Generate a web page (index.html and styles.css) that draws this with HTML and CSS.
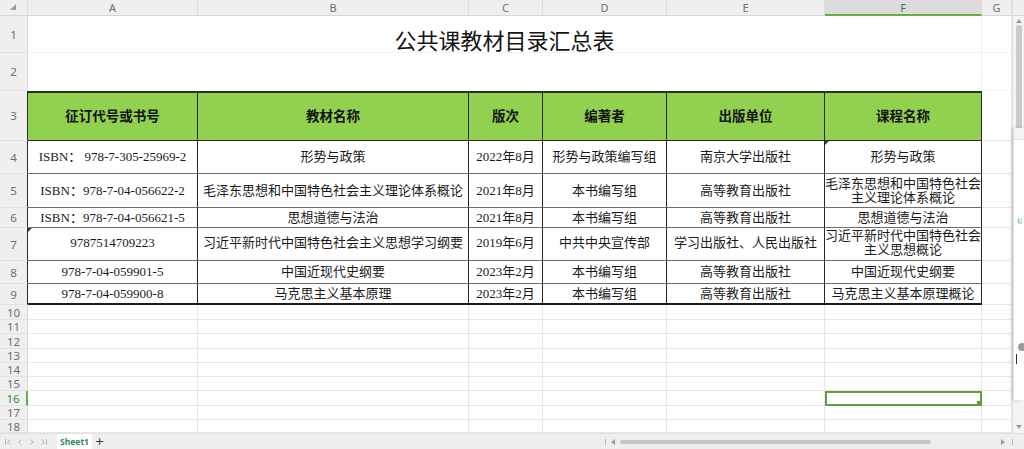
FILE: index.html
```html
<!DOCTYPE html>
<html lang="zh-CN">
<head>
<meta charset="utf-8">
<title>公共课教材目录汇总表</title>
<link rel="stylesheet" href="styles.css">
</head>
<body>
<div class="app">
  <div class="main">
    <div class="sheet">
      <!-- column headers -->
      <div class="c ch corner"><svg width="6" height="6" viewBox="0 0 6 6"><polygon points="6,0 6,6 0,6" fill="#9a9a9a"/></svg></div>
      <div class="c ch">A</div>
      <div class="c ch">B</div>
      <div class="c ch">C</div>
      <div class="c ch">D</div>
      <div class="c ch">E</div>
      <div class="c ch sel">F</div>
      <div class="c ch">G</div>

      <!-- row 1 -->
      <div class="c rh">1</div>
      <div class="c title">公共课教材目录汇总表</div>
      <div class="c faint"></div>

      <!-- row 2 -->
      <div class="c rh">2</div>
      <div class="c blank"></div>
      <div class="c faint"></div>

      <!-- row 3 header -->
      <div class="c rh edge">3</div>
      <div class="c t hd">征订代号或书号</div>
      <div class="c t hd">教材名称</div>
      <div class="c t hd">版次</div>
      <div class="c t hd">编著者</div>
      <div class="c t hd">出版单位</div>
      <div class="c t hd">课程名称</div>
      <div class="c"></div>

      <!-- row 4 -->
      <div class="c rh edge">4</div>
      <div class="c t">ISBN： 978-7-305-25969-2</div>
      <div class="c t">形势与政策</div>
      <div class="c t">2022年8月</div>
      <div class="c t">形势与政策编写组</div>
      <div class="c t">南京大学出版社</div>
      <div class="c t mark">形势与政策</div>
      <div class="c"></div>

      <!-- row 5 -->
      <div class="c rh edge">5</div>
      <div class="c t">ISBN：978-7-04-056622-2</div>
      <div class="c t">毛泽东思想和中国特色社会主义理论体系概论</div>
      <div class="c t">2021年8月</div>
      <div class="c t">本书编写组</div>
      <div class="c t">高等教育出版社</div>
      <div class="c t"><span>毛泽东思想和中国特色社会<br>主义理论体系概论</span></div>
      <div class="c"></div>

      <!-- row 6 -->
      <div class="c rh edge">6</div>
      <div class="c t">ISBN：978-7-04-056621-5</div>
      <div class="c t">思想道德与法治</div>
      <div class="c t">2021年8月</div>
      <div class="c t">本书编写组</div>
      <div class="c t">高等教育出版社</div>
      <div class="c t">思想道德与法治</div>
      <div class="c"></div>

      <!-- row 7 -->
      <div class="c rh edge">7</div>
      <div class="c t mark up">9787514709223</div>
      <div class="c t up">习近平新时代中国特色社会主义思想学习纲要</div>
      <div class="c t up">2019年6月</div>
      <div class="c t up">中共中央宣传部</div>
      <div class="c t up">学习出版社、人民出版社</div>
      <div class="c t up"><span>习近平新时代中国特色社会<br>主义思想概论</span></div>
      <div class="c"></div>

      <!-- row 8 -->
      <div class="c rh edge">8</div>
      <div class="c t">978-7-04-059901-5</div>
      <div class="c t">中国近现代史纲要</div>
      <div class="c t">2023年2月</div>
      <div class="c t">本书编写组</div>
      <div class="c t">高等教育出版社</div>
      <div class="c t">中国近现代史纲要</div>
      <div class="c"></div>

      <!-- row 9 -->
      <div class="c rh edge">9</div>
      <div class="c t last">978-7-04-059900-8</div>
      <div class="c t last">马克思主义基本原理</div>
      <div class="c t last">2023年2月</div>
      <div class="c t last">本书编写组</div>
      <div class="c t last">高等教育出版社</div>
      <div class="c t last">马克思主义基本原理概论</div>
      <div class="c"></div>

      <!-- rows 10-18 -->
      <div class="c rh">10</div><div class="c"></div><div class="c"></div><div class="c"></div><div class="c"></div><div class="c"></div><div class="c"></div><div class="c"></div>
      <div class="c rh">11</div><div class="c"></div><div class="c"></div><div class="c"></div><div class="c"></div><div class="c"></div><div class="c"></div><div class="c"></div>
      <div class="c rh">12</div><div class="c"></div><div class="c"></div><div class="c"></div><div class="c"></div><div class="c"></div><div class="c"></div><div class="c"></div>
      <div class="c rh">13</div><div class="c"></div><div class="c"></div><div class="c"></div><div class="c"></div><div class="c"></div><div class="c"></div><div class="c"></div>
      <div class="c rh">14</div><div class="c"></div><div class="c"></div><div class="c"></div><div class="c"></div><div class="c"></div><div class="c"></div><div class="c"></div>
      <div class="c rh">15</div><div class="c"></div><div class="c"></div><div class="c"></div><div class="c"></div><div class="c"></div><div class="c"></div><div class="c"></div>
      <div class="c rh sel">16</div><div class="c"></div><div class="c"></div><div class="c"></div><div class="c"></div><div class="c"></div><div class="c fsel"></div><div class="c"></div>
      <div class="c rh">17</div><div class="c"></div><div class="c"></div><div class="c"></div><div class="c"></div><div class="c"></div><div class="c"></div><div class="c"></div>
      <div class="c rh">18</div><div class="c"></div><div class="c"></div><div class="c"></div><div class="c"></div><div class="c"></div><div class="c"></div><div class="c"></div>
    </div>

    <div class="vs">
      <div class="vs-head"></div>
      <svg class="vs-arr" width="6" height="4" viewBox="0 0 6 4"><polygon points="3,0 6,4 0,4" fill="#9a9a9a"/></svg>
      <div class="vs-thumb"></div>
      <div class="vs-fill"></div>
      <svg class="vs-arr down" width="6" height="4" viewBox="0 0 6 4"><polygon points="0,0 6,0 3,4" fill="#9a9a9a"/></svg>
    </div>
  </div>

  <div class="tabbar">
    <div class="nav">
      <svg width="12" height="8" viewBox="0 0 12 8"><path d="M3.5 1v6M8.5 1.5L5.5 4l3 2.5" fill="none" stroke="#b3b3b3" stroke-width="1"/></svg>
      <svg width="12" height="8" viewBox="0 0 12 8"><path d="M7.5 1.5L4.5 4l3 2.5" fill="none" stroke="#b3b3b3" stroke-width="1"/></svg>
      <svg width="12" height="8" viewBox="0 0 12 8"><path d="M4.5 1.5L7.5 4l-3 2.5" fill="none" stroke="#b3b3b3" stroke-width="1"/></svg>
      <svg width="12" height="8" viewBox="0 0 12 8"><path d="M3.5 1.5L6.5 4l-3 2.5M8.5 1v6" fill="none" stroke="#b3b3b3" stroke-width="1"/></svg>
    </div>
    <div class="tab">Sheet1</div>
    <div class="plus">+</div>
    <div class="hs">
      <div class="sep"></div>
      <svg class="harr" width="4" height="6" viewBox="0 0 4 6"><polygon points="4,0 4,6 0,3" fill="#9a9a9a"/></svg>
      <div class="track"></div>
      <div class="hs-fill"></div>
      <svg class="harr" width="4" height="6" viewBox="0 0 4 6"><polygon points="0,0 4,3 0,6" fill="#9a9a9a"/></svg>
      <div class="sep right"></div>
    </div>
  </div>

  <div class="panel">
    <div class="panel-head"></div>
    <div class="panel-mark">衫</div>
    <div class="panel-dot"></div>
    <div class="panel-caret"></div>
  </div>
</div>
</body>
</html>
```

FILE: styles.css
```css
* {
  box-sizing: border-box;
  margin: 0;
  padding: 0;
}

body {
  margin: 0;
  width: 1024px;
  height: 449px;
  overflow: hidden;
  background: #ffffff;
  font-family: "Noto Sans", "Noto Sans CJK SC", sans-serif;
}

.app {
  position: relative;
  display: flex;
  flex-direction: column;
  width: 1024px;
  height: 449px;
}

.main {
  display: flex;
  height: 433px;
}

.sheet {
  display: grid;
  width: 1012px;
  grid-template-columns: 28px 170px 271px 74px 124px 158px 157px 30px;
  grid-template-rows: 16px 37px 38px 50px 33px 34px 20px 33px 23px 21px 15px 14px 15px 14px 14px 14px 15px 14px 13px;
}

.c {
  position: relative;
  display: flex;
  align-items: center;
  justify-content: center;
  overflow: hidden;
  white-space: nowrap;
  border-right: 1px solid #e6e6e6;
  border-bottom: 1px solid #e6e6e6;
}

.faint {
  border-bottom-color: #f2f2f2;
}

/* column headers */
.ch {
  background: #efefef;
  color: #6e6e6e;
  font-size: 11px;
  border-right-color: #dedede;
  border-bottom-color: #d6d6d6;
}

.ch.sel {
  background: #dcdcdc;
  color: #2f7d52;
  border-bottom: 2px solid #6aac4a;
}

.corner {
  justify-content: flex-start;
  align-items: flex-start;
  padding: 4px 0 0 10px;
}

/* row headers */
.rh {
  background: #efefef;
  color: #6e6e6e;
  font-size: 11.5px;
  border-right-color: #d9d9d9;
  border-bottom-color: #e3e3e3;
}

.rh.edge {
  border-right: 1px solid #2a2a2a;
}

.rh.sel {
  color: #2f8a45;
  border-right: 2px solid #6aac4a;
}

/* title */
.title {
  grid-column: span 6;
  align-items: flex-end;
  overflow: visible;
  padding-bottom: 0;
  font-family: "Noto Sans CJK SC", sans-serif;
  font-size: 22px;
  line-height: 26px;
  color: #141414;
  border-right-color: #eeeeee;
  border-bottom-color: #f3f3f3;
}

.blank {
  grid-column: span 6;
  border-bottom: none;
  border-right-color: #eeeeee;
}

/* table cells */
.t {
  font-family: "Liberation Serif", "Noto Sans CJK SC", serif;
  font-size: 13px;
  line-height: 14px;
  color: #1a1a1a;
  text-align: center;
  border-right: 1px solid #262626;
  border-bottom: 1px solid #6e6e6e;
}

.t.up {
  padding-bottom: 3px;
}

.hd {
  background: #92d050;
  font-weight: 700;
  font-size: 13.5px;
  color: #141414;
  border-top: 2px solid #26331f;
  border-bottom: 1px solid #2b2b2b;
  border-right-color: #2b2b2b;
}

.last {
  border-bottom: 2px solid #1c1c1c;
}

.mark::before {
  content: "";
  position: absolute;
  left: 0;
  top: 0;
  border-top: 4px solid #2f4a2a;
  border-right: 4px solid transparent;
}

.fsel {
  outline: 2px solid #5e9f41;
  outline-offset: -2px;
}

.fsel::after {
  content: "";
  position: absolute;
  right: 0;
  bottom: 0;
  width: 4px;
  height: 4px;
  background: #5e9f41;
}

/* vertical scrollbar */
.vs {
  width: 12px;
  display: flex;
  flex-direction: column;
  align-items: center;
  background: #f3f3f3;
  border-left: 1px solid #e2e2e2;
}

.vs-head {
  width: 100%;
  height: 16px;
  flex: none;
  background: #efefef;
  border-bottom: 1px solid #d6d6d6;
}

.vs-arr {
  flex: none;
  margin-top: 3px;
}

.vs-arr.down {
  margin-top: 0;
  margin-bottom: 4px;
}

.vs-thumb {
  flex: none;
  width: 6px;
  height: 270px;
  margin-top: 2px;
  background: #cacaca;
  border-radius: 3px;
}

.vs-fill {
  flex: 1;
}

/* tab bar */
.tabbar {
  display: flex;
  align-items: center;
  height: 16px;
  background: #eeeeee;
  border-top: 1px solid #e2e2e2;
}

.nav {
  display: flex;
  align-items: center;
  padding-left: 2px;
}

.tab {
  display: flex;
  align-items: center;
  justify-content: center;
  width: 35px;
  height: 15px;
  margin-left: 7px;
  background: #ffffff;
  color: #2f8a52;
  font-family: "Noto Sans", sans-serif;
  font-size: 8.5px;
  font-weight: 700;
}

.plus {
  margin-left: 3px;
  font-family: "DejaVu Sans", sans-serif;
  font-size: 11px;
  line-height: 11px;
  color: #333333;
}

.hs {
  display: flex;
  align-items: center;
  width: 421px;
  height: 100%;
  margin-left: auto;
}

.sep {
  width: 1px;
  height: 6px;
  margin-left: 2px;
  background: #b8b8b8;
}

.sep.right {
  margin-left: 7px;
  margin-right: 11px;
}

.harr {
  margin-left: 5px;
}

.track {
  width: 311px;
  height: 4px;
  margin-left: 5px;
  background: #c6c6c6;
  border-radius: 2px;
}

.hs-fill {
  flex: 1;
}

/* floating side panel (partly off-screen) */
.panel {
  position: absolute;
  left: 1013px;
  top: 128px;
  width: 11px;
  height: 272px;
  background: #ffffff;
  border-left: 1px solid #dedede;
  box-shadow: -1px 0 4px rgba(0, 0, 0, 0.16);
}

.panel-head {
  height: 12px;
  background: #f4f4f4;
  border-bottom: 1px solid #e6e6e6;
}

.panel-mark {
  margin-top: 78px;
  padding-left: 3px;
  font-family: "Noto Sans CJK SC", sans-serif;
  font-size: 6px;
  line-height: 6px;
  color: #58a86a;
}

.panel-dot {
  width: 8px;
  height: 8px;
  margin: 119px 0 0 4px;
  border-radius: 50%;
  background: #9c9c9c;
}

.panel-caret {
  width: 1px;
  height: 10px;
  margin: 3px 0 0 2px;
  background: #333333;
}
```
